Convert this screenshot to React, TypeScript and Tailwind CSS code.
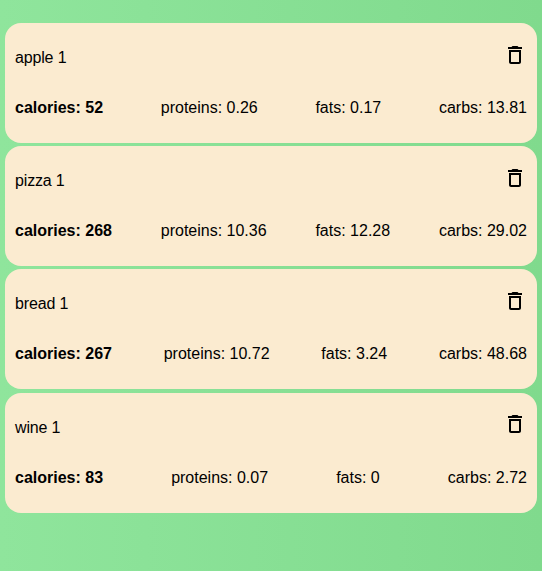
import { MdDeleteOutline } from "react-icons/md";

type Food = { name: string; calories: string; proteins: string; fats: string; carbs: string };

const foods: Food[] = [
  { name: "apple 1", calories: "52", proteins: "0.26", fats: "0.17", carbs: "13.81" },
  { name: "pizza 1", calories: "268", proteins: "10.36", fats: "12.28", carbs: "29.02" },
  { name: "bread 1", calories: "267", proteins: "10.72", fats: "3.24", carbs: "48.68" },
  { name: "wine 1", calories: "83", proteins: "0.07", fats: "0", carbs: "2.72" },
];

function FoodCard({ food }: { food: Food }) {
  return (
    <li className="h-[120px] rounded-[16px] bg-[#fbebd0] px-[10px] pt-[19.8px]">
      <div className="flex h-[30px] items-start justify-between">
        <span className="pt-[3.2px] tracking-[-0.01em]">{food.name}</span>
        <button aria-label="Delete" className="block">
          <MdDeleteOutline size={24} />
        </button>
      </div>
      <div className="mt-[23.2px] flex justify-between">
        <span className="font-bold">calories: {food.calories}</span>
        <span>proteins: {food.proteins}</span>
        <span>fats: {food.fats}</span>
        <span>carbs: {food.carbs}</span>
      </div>
    </li>
  );
}

export default function App() {
  return (
    <main className="h-[571px] bg-linear-to-r from-[#8fe59c] to-[#80da8d] px-[5px] pt-[23px] font-['Liberation_Sans',Arial,sans-serif] text-[16px] leading-[24px] text-black">
      <ul className="flex flex-col gap-[3.2px]">
        {foods.map((food) => (
          <FoodCard key={food.name} food={food} />
        ))}
      </ul>
    </main>
  );
}
